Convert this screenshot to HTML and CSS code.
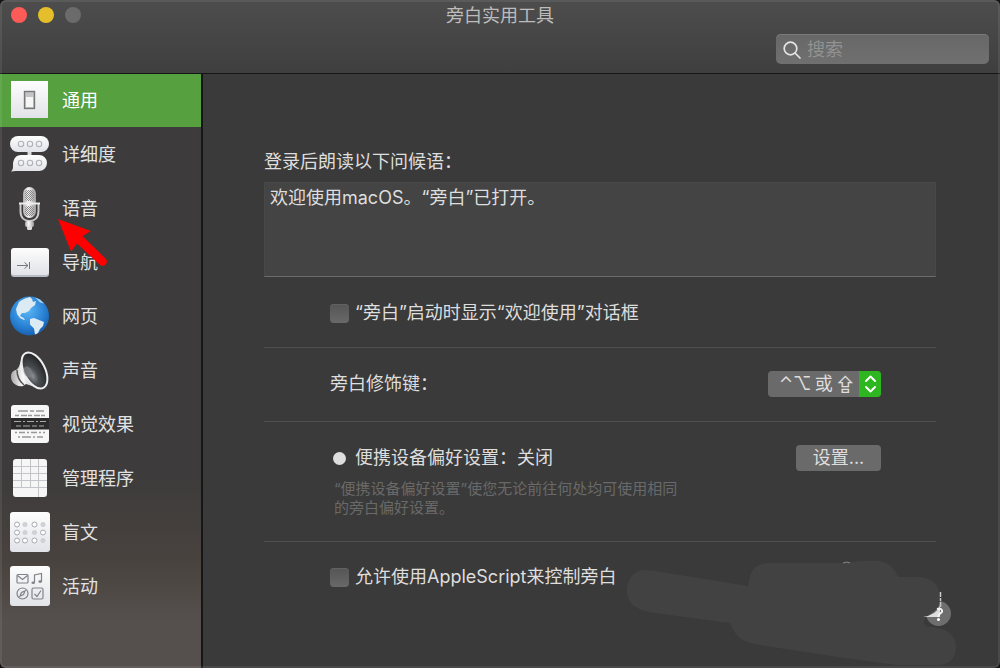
FILE: index.html
```html
<!DOCTYPE html>
<html lang="zh-CN">
<head>
<meta charset="utf-8">
<meta name="viewport" content="width=device-width, initial-scale=1">
<title>旁白实用工具</title>
<link rel="stylesheet" href="styles.css">
</head>
<body>
<svg class="defs" width="0" height="0" aria-hidden="true">
  <defs>
    <linearGradient id="paper" x1="0" y1="0" x2="0" y2="1"><stop offset="0" stop-color="#fdfdfd"/><stop offset="1" stop-color="#e2e3e8"/></linearGradient>
    <linearGradient id="metal" x1="0" y1="0" x2="1" y2="0"><stop offset="0" stop-color="#a9a9a9"/><stop offset=".4" stop-color="#fafafa"/><stop offset="1" stop-color="#9a9a9a"/></linearGradient>
    <radialGradient id="ocean" cx=".45" cy=".35" r=".7"><stop offset="0" stop-color="#5bb8f5"/><stop offset=".6" stop-color="#2a83d6"/><stop offset="1" stop-color="#145aa8"/></radialGradient>
    <radialGradient id="cone" cx=".3" cy=".6" r=".7"><stop offset="0" stop-color="#8d9196"/><stop offset=".35" stop-color="#4a4d50"/><stop offset="1" stop-color="#202224"/></radialGradient>
    <pattern id="mesh" width="2" height="2" patternUnits="userSpaceOnUse"><rect width="1" height="1" fill="#888"/><rect x="1" y="1" width="1" height="1" fill="#888"/></pattern>
  </defs>
</svg>
<div class="window">
  <header class="titlebar">
    <div class="title-row">
      <div class="lights">
        <button class="light close" aria-label="关闭"></button>
        <button class="light minimize" aria-label="最小化"></button>
        <button class="light zoom" aria-label="缩放"></button>
      </div>
      <h1 class="title">旁白实用工具</h1>
    </div>
    <label class="search">
      <svg width="18" height="18" viewBox="0 0 18 18" fill="none" stroke="#e4e4e4" stroke-width="1.7" stroke-linecap="round" aria-hidden="true"><circle cx="7.5" cy="7.5" r="6.3"/><path d="M12 12l5 5"/></svg>
      <input type="search" placeholder="搜索" aria-label="搜索">
    </label>
  </header>
  <div class="body">
    <nav class="sidebar">
      <a class="item selected" href="#general" aria-current="page">
        <svg class="icon" viewBox="0 0 40 40" aria-hidden="true"><rect x="1" y="1" width="37" height="37" fill="url(#paper)"/><rect x="13.500" y="10.500" width="12" height="19" rx="1" fill="#c4c4c8"/><rect x="14" y="11" width="11" height="18" fill="#777"/><rect x="15.200" y="12.200" width="8.600" height="15.600" fill="#c4c4c4"/><rect x="16" y="17" width="7" height="10" fill="#f6f6f6"/></svg>
        <span>通用</span></a>
      <a class="item" href="#verbosity">
        <svg class="icon" viewBox="0 0 40 40" aria-hidden="true"><rect x="17.500" y="15" width="4" height="10" fill="#ddd"/><rect x="0" y="2" width="39" height="16" rx="8" fill="url(#paper)"/><path d="M11 21h18a8 8 0 0 1 0 16H10c-3 0-5 0-9 .5 2-2 2-3 2-6.500C3 25 6 21 11 21z" fill="url(#paper)"/><g fill="none" stroke="#b0b3b8" stroke-width="1.100"><circle cx="11" cy="10" r="2.700"/><circle cx="20" cy="10" r="2.700"/><circle cx="29" cy="10" r="2.700"/><circle cx="11" cy="29" r="2.700"/><circle cx="20" cy="29" r="2.700"/><circle cx="29" cy="29" r="2.700"/></g></svg>
        <span>详细度</span></a>
      <a class="item" href="#speech">
        <svg class="icon tall" viewBox="0 0 40 44" aria-hidden="true"><path d="M10.500 18v7c0 7 4 10 9 10s9-3 9-10v-7" fill="none" stroke="#c9c9c9" stroke-width="2"/><rect x="13" y="1" width="13" height="31" rx="6.500" fill="url(#metal)"/><rect x="15" y="4" width="9" height="11" rx="3" fill="url(#mesh)"/><rect x="15" y="20" width="9" height="10" rx="3" fill="url(#mesh)"/><path d="M9 16.500h21v2H9z" fill="#eee"/><rect x="15" y="35" width="9" height="6" rx="2" fill="url(#metal)"/><rect x="17" y="40" width="5" height="4" rx="1.500" fill="#ddd"/></svg>
        <span>语音</span></a>
      <a class="item" href="#navigation">
        <svg class="icon" viewBox="0 0 40 40" aria-hidden="true"><rect x="1" y="7" width="38" height="28" rx="3" fill="#b9bcc4"/><rect x="1" y="6" width="38" height="27" rx="3" fill="url(#paper)"/><path d="M7 23.500h11M14.500 20.500l3.500 3-3.500 3M19.500 20v7" fill="none" stroke="#777"/></svg>
        <span>导航</span></a>
      <a class="item" href="#web">
        <svg class="icon" viewBox="0 0 40 40" aria-hidden="true"><circle cx="19.500" cy="20" r="19.500" fill="url(#ocean)"/><path d="M9 6c3-2.500 8-4.500 11-5l2 2 1 3 3-1-1 4-4 3-2 3-4 2-3 0-2 3 3 1.500 2 2-1 .5-4-2-3-4-1-5z" fill="#dbeaf3"/><path d="M20 23l4-1 5 2 5 2-1 4-3 3-2 4-3 1.500-1-6-4-4z" fill="#dbeaf3"/><path d="M25 1.500l5 2 4 4-4-1z" fill="#a9d2ee"/></svg>
        <span>网页</span></a>
      <a class="item" href="#sound">
        <svg class="icon" viewBox="0 0 40 40" aria-hidden="true"><path d="M13 4C10 12 10 18 6 20c-5 1-6 6-4 11 2 4 7 6 11 5l3-2 15 5z" fill="url(#metal)"/><path d="M7 20c0 6 2 11 7 15" stroke="#555" stroke-width="1.500" fill="none"/><ellipse cx="24.500" cy="20.500" rx="10.500" ry="19.500" transform="rotate(-27 24.500 20.500)" fill="url(#cone)" stroke="#eee" stroke-width="2"/><ellipse cx="18" cy="22" rx="4" ry="6" transform="rotate(-27 18 22)" fill="#7d8186" opacity=".7"/></svg>
        <span>声音</span></a>
      <a class="item" href="#visuals">
        <svg class="icon" viewBox="0 0 40 40" aria-hidden="true"><rect x="1" y="1" width="38" height="38" rx="3" fill="#f7f7f7"/><rect x="1" y="14" width="38" height="11.500" fill="#2b2b2b"/><g fill="none" stroke="#999" stroke-width="1.300"><path d="M8 7h26" stroke-dasharray="10 2 4 2"/><path d="M5 11.500h30" stroke-dasharray="4 2 6 1"/><path d="M5 28.500h30" stroke-dasharray="2 2 6 2"/><path d="M8 33h25" stroke-dasharray="2 2 9 2"/></g><g fill="none" stroke="#aaa" stroke-width="1.200"><path d="M4 17.500h32" stroke-dasharray="7 2 2 2"/><path d="M6 22h28" stroke-dasharray="5 2 7 2"/></g></svg>
        <span>视觉效果</span></a>
      <a class="item" href="#commanders">
        <svg class="icon" viewBox="0 0 40 40" aria-hidden="true"><rect x="3" y="1" width="34" height="38" rx="3" fill="#f6f6f7"/><path d="M3 8.500h34M3 15.500h34M3 22.500h34M3 29.500h34M11.500 1v28.500M20.500 1v28.500M28.500 1v38" stroke="#c3c5c9" fill="none"/></svg>
        <span>管理程序</span></a>
      <a class="item" href="#braille">
        <svg class="icon" viewBox="0 0 40 40" aria-hidden="true"><rect x="0" y="0" width="40" height="40" rx="3" fill="url(#paper)"/><g fill="#fff" stroke="#a5a8ad"><circle cx="7" cy="12.500" r="2.500"/><circle cx="24.500" cy="12.500" r="2.500"/><circle cx="7" cy="20.500" r="2.500"/><circle cx="33" cy="20.500" r="2.500"/><circle cx="7" cy="28.500" r="2.500"/><circle cx="15" cy="28.500" r="2.500"/><circle cx="24.500" cy="28.500" r="2.500"/></g><g fill="#cfd1d6"><circle cx="15" cy="12.500" r="2.500"/><circle cx="33" cy="12.500" r="2.500"/><circle cx="15" cy="20.500" r="2.500"/><circle cx="24.500" cy="20.500" r="2.500"/><circle cx="33" cy="28.500" r="2.500"/></g></svg>
        <span>盲文</span></a>
      <a class="item" href="#activities">
        <svg class="icon" viewBox="0 0 40 40" aria-hidden="true"><rect x="0" y="0" width="40" height="40" rx="3" fill="url(#paper)"/><g fill="none" stroke="#808388" stroke-width="1.200"><rect x="7" y="8.500" width="11" height="8.500" rx="1"/><path d="M7.500 9.500l5 4 5-4M24.500 16.500V9l7-1.500v8"/><circle cx="12.500" cy="27.500" r="5.500"/><path d="M10 30l1.500-3.500L15 25l-1.500 3.500z"/><rect x="22" y="22" width="11" height="11" rx="1.500"/><path d="M24.500 28l2.500 2.500 4-6"/></g><ellipse cx="23.200" cy="16.800" rx="1.800" ry="1.300" fill="#808388"/><ellipse cx="30.200" cy="15.600" rx="1.800" ry="1.300" fill="#808388"/></svg>
        <span>活动</span></a>
      <svg class="pointer" width="50" height="52" viewBox="0 0 50 52" aria-hidden="true"><path d="M0 1L33 13l-8.500 5L48 41c3 4-2 9-6 6L19 25.500l-6 8z" fill="#fe0000"/></svg>
    </nav>
    <main class="content">
      <section class="group greeting">
        <label class="heading" for="greet">登录后朗读以下问候语：</label>
        <textarea id="greet" spellcheck="false">欢迎使用macOS。“旁白”已打开。</textarea>
        <label class="row inset"><input type="checkbox"><span>“旁白”启动时显示“欢迎使用”对话框</span></label>
      </section>
      <section class="group">
        <div class="row inset spread">
          <label for="modifier">旁白修饰键：</label>
          <div class="popup">
            <select id="modifier"><option>⌃⌥&thinsp;或&thinsp;⇪</option></select>
            <svg width="22" height="26" viewBox="0 0 22 26" fill="none" stroke="#fff" stroke-width="2" stroke-linecap="round" stroke-linejoin="round" aria-hidden="true"><path d="M7 10l4.500-4.500L16 10M7 16l4.500 4.500L16 16"/></svg>
          </div>
        </div>
      </section>
      <section class="group">
        <div class="row inset spread">
          <div class="row"><span class="dot"></span><span>便携设备偏好设置：关闭</span></div>
          <button class="push">设置...</button>
        </div>
        <p class="note">“便携设备偏好设置”使您无论前往何处均可使用相同的旁白偏好设置。</p>
      </section>
      <section class="group last">
        <label class="row inset"><input type="checkbox"><span>允许使用AppleScript来控制旁白</span></label>
      </section>
      <button class="help" aria-label="帮助"></button>
      <svg class="smudge" width="340" height="112" viewBox="0 0 340 112" aria-hidden="true">
        <path d="M1 34C1 24 8 14 18 14L29 15 122 30C124 18 126 8 142 7H214L236 5C256 3 266 6 272 21H292C306 21 313 29 314 40C315 50 312 54 300 61C297 66 297 69 302 71C320 71 330 79 330 90C330 101 325 109 312 109H270L212 101 140 90C120 87 111 84 105 69C103 66 100 66 96 66L29 57C10 54 1 48 1 34Z" fill="#424242"/>
        <path d="M217 7q4-2 7 0" stroke="#888" fill="none"/>
        <path d="M297 61q13-2 17-11v11z" fill="#ddd"/>
        <path d="M314.500 36v16" stroke="#c8c8c8" stroke-width="1.500" stroke-dasharray="5 1 3 1"/>
        <path d="M311 53q6-1 5 3-3 2-4 5" stroke="#f4f4f4" stroke-width="2" fill="none"/>
        <circle cx="312.500" cy="63.500" r="1.500" fill="#fff"/>
      </svg>
    </main>
  </div>
</div>
</body>
</html>
```
FILE: styles.css
```css
* { box-sizing: border-box; }

body {
  margin: 0;
  background: #141414;
  color: #dedede;
  font: 18px/24px Inter, "Noto Sans CJK SC", sans-serif;
}

.defs { position: absolute; }

button, input, textarea, select { font: inherit; color: inherit; }

.window {
  position: relative;
  display: flex;
  flex-direction: column;
  min-height: 100vh;
  overflow: hidden;
  border-radius: 6px;
  background: #3a3a3a;
}

.window::after {
  content: "";
  position: absolute;
  inset: 0;
  border: 2px solid rgba(255, 255, 255, .08);
  border-radius: 6px;
  pointer-events: none;
}

.titlebar {
  display: flex;
  flex-direction: column;
  height: 74px;
  padding: 4px 11px 0;
  border-bottom: 1px solid #151515;
  background: linear-gradient(#4d4d4d, #3f3f3f);
}

.title-row {
  display: grid;
  grid-template-columns: 1fr auto 1fr;
}

.lights { display: flex; gap: 11px; padding-top: 3px; }

.light {
  width: 16px;
  height: 16px;
  padding: 0;
  border: 0;
  border-radius: 50%;
}

.close { background: #fc5b57; }
.minimize { background: #e5bf2b; }
.zoom { background: #6b6b6b; }

.title {
  margin: 0;
  color: #bcbcbc;
  font-size: 18px;
  font-weight: 400;
}

.search {
  display: flex;
  align-items: center;
  align-self: flex-end;
  gap: 6px;
  width: 213px;
  height: 30px;
  margin-top: 6px;
  padding: 1px 7px 0;
  border-radius: 5px;
  background: linear-gradient(#676767, #707070);
  box-shadow: inset 0 1px #7a7a7a;
}

.search input {
  flex: 1;
  min-width: 0;
  padding: 0;
  border: 0;
  outline: 0;
  background: none;
}

.search input::placeholder { color: #929292; opacity: 1; }

.body { display: flex; flex: 1; }

.sidebar {
  position: relative;
  flex: 0 0 203px;
  border-right: 2px solid #161616;
  background: linear-gradient(#3d3b3b 68%, #49433f 82%, #554f4d 92%);
}

.item {
  display: flex;
  align-items: center;
  gap: 12px;
  height: 54px;
  padding-left: 10px;
  color: #e2e2e2;
  text-decoration: none;
}

.selected {
  background: linear-gradient(#56a03f 53px, #3d3b3b 53px);
  color: #fff;
}

.icon { flex: none; width: 40px; height: 40px; margin-bottom: 2px; }
.tall { height: 44px; }

.pointer { position: absolute; left: 58px; top: 144px; pointer-events: none; }

.content {
  position: relative;
  flex: 1;
  min-width: 0;
  padding: 76px 64px 24px 61px;
}

.group { padding: 23px 0 24px; border-bottom: 1px solid #4f4f4f; }
.greeting { padding: 0 0 22px; }
.last { border: 0; }

.heading { display: block; margin-bottom: 8px; }

textarea {
  display: block;
  width: 100%;
  height: 95px;
  margin-bottom: 24px;
  padding: 3px 5px;
  border: 1px solid #484848;
  border-bottom-color: #6c6c6c;
  outline: 0;
  background: #444;
  resize: none;
}

.row { display: flex; align-items: center; gap: 6px; }
.inset { padding: 0 55px 0 66px; }
.spread { justify-content: space-between; }

input[type="checkbox"] {
  appearance: none;
  width: 19px;
  height: 19px;
  margin: 0;
  border-radius: 4px;
  background: linear-gradient(#555, #696969);
  box-shadow: inset 0 1px #626262;
}

.popup { position: relative; }

.popup select {
  appearance: none;
  display: block;
  width: 113px;
  height: 26px;
  padding: 0 22px 0 11px;
  border: 0;
  border-radius: 4px;
  background: #6a6a6a;
  font-family: Inter, "Noto Sans CJK SC", "DejaVu Sans", sans-serif;
}

.popup svg {
  position: absolute;
  top: 0;
  right: 0;
  border-radius: 0 4px 4px 0;
  background: #2db61f;
  pointer-events: none;
}

.dot {
  width: 13px;
  height: 13px;
  margin: 0 3px;
  border-radius: 50%;
  background: #dedede;
}

.push {
  width: 85px;
  height: 26px;
  padding: 0;
  border: 0;
  border-radius: 4px;
  background: #6a6a6a;
}

.note {
  max-width: 422px;
  margin: 8px 0 0;
  padding-left: 70px;
  color: #696969;
  font-size: 15px;
  line-height: 19px;
}

.help {
  position: absolute;
  right: 49px;
  bottom: 42px;
  width: 25px;
  height: 25px;
  padding: 0;
  border: 0;
  border-radius: 50%;
  background: #6e6e6e;
}

.smudge {
  position: absolute;
  right: 34px;
  bottom: 0;
  pointer-events: none;
}
```
